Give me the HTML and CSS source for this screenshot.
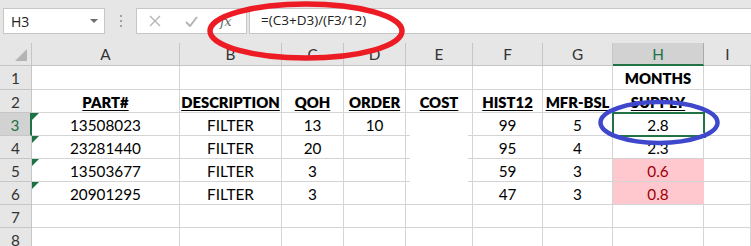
FILE: index.html
```html
<!DOCTYPE html>
<html>
<head>
<meta charset="utf-8">
<link rel="stylesheet" href="styles.css">
</head>
<body>
<div class="app">
  <div class="fbar">
    <div class="namebox">
      <span class="nb-text">H3</span>
      <svg class="nb-arrow" width="8" height="4" viewBox="0 0 8 4"><path d="M0 0 H8 L4 4 Z" fill="#6e6e6e"/></svg>
    </div>
    <div class="grip"><i></i><i></i><i></i></div>
    <div class="btns">
      <svg class="ic" width="12" height="12" viewBox="0 0 12 12"><path d="M1 1 L11 11 M11 1 L1 11" stroke="#b4b4b4" stroke-width="1.4" fill="none"/></svg>
      <svg class="ic" width="13" height="11" viewBox="0 0 13 11"><path d="M1 6 L5 10 L12 1" stroke="#b4b4b4" stroke-width="2" fill="none"/></svg>
      <span class="fx">fx</span>
    </div>
    <div class="formula">=(C3+D3)/(F3/12)</div>
  </div>

  <div class="sheet">
    <div class="corner"><span class="corner-tri"></span></div>
    <div class="hd">A</div><div class="hd">B</div><div class="hd">C</div><div class="hd">D</div><div class="hd">E</div><div class="hd">F</div><div class="hd">G</div><div class="hd hd-sel">H</div><div class="hd hd-last">I</div>

    <div class="rh r1">1</div>
    <div class="c r1"></div><div class="c r1"></div><div class="c r1"></div><div class="c r1"></div><div class="c r1"></div><div class="c r1"></div><div class="c r1"></div><div class="c r1 b">MONTHS</div><div class="c r1"></div>

    <div class="rh">2</div>
    <div class="c b"><u>PART#</u></div><div class="c b"><u>DESCRIPTION</u></div><div class="c b"><u>QOH</u></div><div class="c b"><u>ORDER</u></div><div class="c b"><u>COST</u></div><div class="c b"><u>HIST12</u></div><div class="c b"><u>MFR-BSL</u></div><div class="c b"><u>SUPPLY</u></div><div class="c"></div>

    <div class="rh rh-sel">3</div>
    <div class="c tri">13508023</div><div class="c">FILTER</div><div class="c">13</div><div class="c">10</div><div class="c e-open"></div><div class="c">99</div><div class="c">5</div><div class="c active">2.8<span class="handle"></span></div><div class="c"></div>

    <div class="rh">4</div>
    <div class="c tri">23281440</div><div class="c">FILTER</div><div class="c">20</div><div class="c"></div><div class="c e-open"></div><div class="c">95</div><div class="c">4</div><div class="c">2.3</div><div class="c"></div>

    <div class="rh">5</div>
    <div class="c tri">13503677</div><div class="c">FILTER</div><div class="c">3</div><div class="c"></div><div class="c e-open"></div><div class="c">59</div><div class="c">3</div><div class="c bad">0.6</div><div class="c"></div>

    <div class="rh">6</div>
    <div class="c tri">20901295</div><div class="c">FILTER</div><div class="c">3</div><div class="c"></div><div class="c"></div><div class="c">47</div><div class="c">3</div><div class="c bad">0.8</div><div class="c"></div>

    <div class="rh">7</div>
    <div class="c"></div><div class="c"></div><div class="c"></div><div class="c"></div><div class="c"></div><div class="c"></div><div class="c"></div><div class="c"></div><div class="c"></div>

    <div class="rh">8</div>
    <div class="c"></div><div class="c"></div><div class="c"></div><div class="c"></div><div class="c"></div><div class="c"></div><div class="c"></div><div class="c"></div><div class="c"></div>
  </div>

  <svg class="marks" width="751" height="246" viewBox="0 0 751 246">
    <ellipse cx="306" cy="31" rx="96" ry="27" fill="none" stroke="#ed1c24" stroke-width="5.5"/>
    <ellipse cx="659" cy="122.5" rx="58.5" ry="20.5" fill="none" stroke="#3f48cc" stroke-width="4.5"/>
  </svg>
</div>
</body>
</html>
```

FILE: styles.css
```css
* { box-sizing: border-box; }
html, body { margin: 0; padding: 0; }
body {
  background: #e6e6e6;
  width: 751px;
  height: 246px;
  overflow: hidden;
}
.app {
  position: relative;
  width: 751px;
  height: 246px;
  overflow: hidden;
}

/* formula bar */
.fbar {
  height: 43px;
  display: flex;
  align-items: flex-start;
  padding-top: 8px;
  padding-left: 3px;
  font-family: "Open Sans", "Noto Sans", sans-serif;
}
.namebox {
  width: 102px;
  height: 26px;
  background: #fff;
  border: 1px solid #c6c6c6;
  display: flex;
  align-items: center;
  justify-content: space-between;
  padding: 0 6px 0 7px;
}
.nb-text { font-size: 14px; color: #222; }
.nb-arrow { display: block; }
.grip {
  width: 31px;
  height: 26px;
  display: flex;
  flex-direction: column;
  align-items: center;
  justify-content: center;
  gap: 3px;
}
.grip i {
  display: block;
  width: 2px;
  height: 2px;
  background: #a0a0a0;
}
.btns {
  width: 111px;
  height: 26px;
  background: #fff;
  border: 1px solid #c6c6c6;
  display: flex;
  align-items: center;
  padding-left: 12px;
  gap: 24px;
}
.ic { display: block; }
.fx {
  font-family: "DejaVu Serif", "Liberation Serif", serif;
  font-style: italic;
  font-size: 13px;
  color: #666;
  letter-spacing: -0.5px;
  margin-left: -2px;
}
.formula {
  flex: 1;
  height: 26px;
  margin-left: 2px;
  margin-right: -4px;
  background: #fff;
  border: 1px solid #c6c6c6;
  font-size: 13.5px;
  color: #222;
  padding-left: 11px;
  line-height: 23px;
}

/* sheet grid */
.sheet {
  display: grid;
  grid-template-columns: 32px 148px 102px 62px 62px 67px 70px 70px 91px 1fr;
  grid-template-rows: 23px 24px repeat(7, 23px);
  font-family: "Lato", "Open Sans", sans-serif;
  font-size: 15.3px;
}
.corner {
  position: relative;
  background: #e6e6e6;
  border-right: 1px solid #c6c6c6;
  border-bottom: 1px solid #c6c6c6;
}
.corner-tri {
  position: absolute;
  right: 4px;
  bottom: 4px;
  width: 12px;
  height: 12px;
  background: #b4b4b4;
  clip-path: polygon(100% 0, 100% 100%, 0 100%);
}
.hd {
  background: #e6e6e6;
  border-right: 1px solid #c6c6c6;
  border-bottom: 1px solid #c6c6c6;
  text-align: center;
  color: #333;
  line-height: 22px;
}
.hd-last { border-right: none; }
.hd-sel {
  background: #d2d2d2;
  color: #217346;
  border-bottom: 2px solid #217346;
  border-right-color: #ababab;
}
.rh {
  background: #e6e6e6;
  border-right: 1px solid #c6c6c6;
  border-bottom: 1px solid #c6c6c6;
  text-align: center;
  color: #333;
  line-height: 24px;
}
.rh.r1 { line-height: 25px; }
.rh-sel {
  background: #d2d2d2;
  color: #217346;
  border-right: 2px solid #217346;
}
.c {
  position: relative;
  background: #fff;
  border-right: 1px solid #d4d4d4;
  border-bottom: 1px solid #d4d4d4;
  text-align: center;
  color: #000;
  line-height: 24px;
  white-space: nowrap;
}
.c.r1 { line-height: 25px; }
.b { font-weight: 800; font-size: 14.8px; }
.b u { text-underline-offset: 2px; text-decoration-thickness: 1px; }

.e-open {
  border-bottom-color: transparent;
  background-image: linear-gradient(#d4d4d4, #d4d4d4), linear-gradient(#d4d4d4, #d4d4d4);
  background-size: 4px 1px, 5px 1px;
  background-position: left bottom, right bottom;
  background-repeat: no-repeat;
  background-origin: border-box;
  background-clip: border-box;
}

.tri::before {
  content: "";
  position: absolute;
  left: 0;
  top: 0;
  width: 7px;
  height: 7px;
  background: #1e7145;
  clip-path: polygon(0 0, 100% 0, 0 100%);
}

.bad {
  background: #ffc7ce;
  color: #9c0006;
  border-right-color: #ffc7ce;
}

.active {
  outline: 2px solid #217346;
  outline-offset: -1px;
  z-index: 1;
}
.handle {
  position: absolute;
  right: -4px;
  bottom: -4px;
  width: 6px;
  height: 6px;
  background: #217346;
  border: 1px solid #fff;
}

.marks {
  position: absolute;
  left: 0;
  top: 0;
  pointer-events: none;
  z-index: 5;
}
```
